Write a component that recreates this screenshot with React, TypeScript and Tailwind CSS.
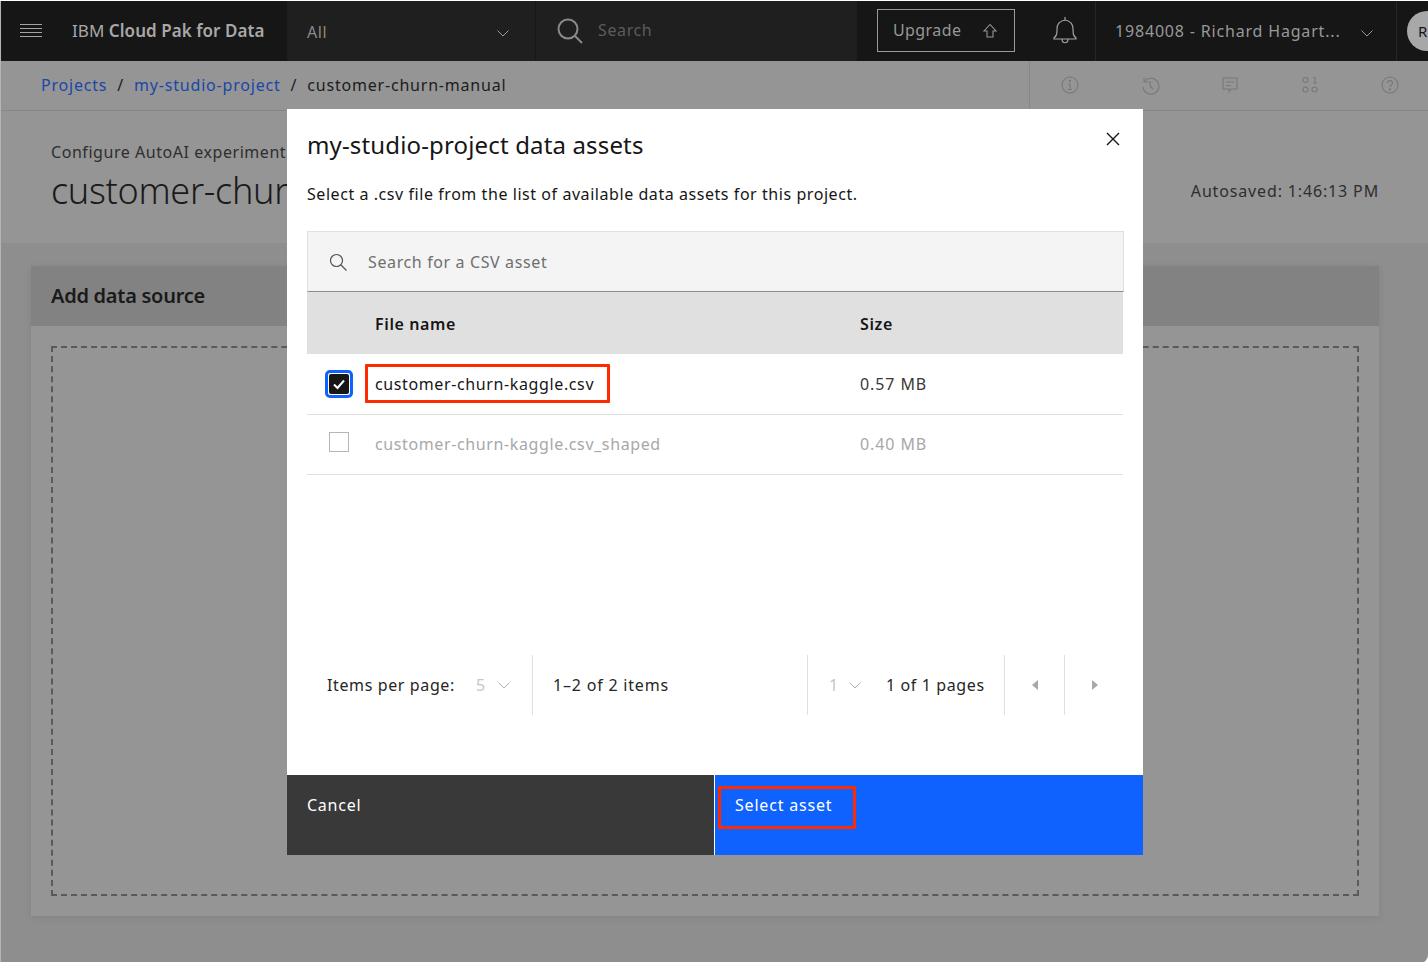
import React from "react";

const Chevron = ({ className = "" }: { className?: string }) => (
  <svg width="16" height="16" viewBox="0 0 16 16" fill="none" stroke="currentColor" strokeWidth="1" className={className}>
    <path d="M2.5 5.5 8 11l5.5-5.5" />
  </svg>
);

const Ic = ({ children }: { children: React.ReactNode }) => (
  <svg width="20" height="20" viewBox="0 0 20 20" fill="none" stroke="#787878" strokeWidth="1.1">
    {children}
  </svg>
);

const Sep = () => <div className="w-px h-full shrink-0 bg-[#e0e0e0]" />;

export default function App() {
  return (
    <div className="relative w-[1428px] h-[962px] overflow-hidden bg-white text-[16px] tracking-[0.62px] font-['Noto_Sans',sans-serif]">
      <div className="w-full h-full mt-px border-l border-[#b5b5b5] bg-[#8e8e8e] rounded-br-[8px] flex flex-col overflow-hidden">
        {/* Top bar */}
        <header className="h-[60px] shrink-0 flex bg-[#161616] text-[#9a9a9a]">
          <div className="w-[286px] shrink-0 flex items-center">
            <svg width="22" height="16" viewBox="0 0 22 16" stroke="#a3a3a3" strokeWidth="1.2" className="ml-[19px]">
              <path d="M0 1.5h22M0 5.5h22M0 9.5h22M0 13.5h22" />
            </svg>
            <span className="ml-[30px] text-[17px] tracking-[0.05px] text-[#a8a8a8] whitespace-nowrap">
              IBM <span className="font-semibold">Cloud Pak for Data</span>
            </span>
          </div>
          <div className="w-[570px] shrink-0 flex bg-[#1f1f1f]">
            <div className="w-[249px] flex items-center justify-between pl-[20px] pr-[24px] border-r border-[#161616] text-[#8a8a8a]">
              <span className="pt-[2px]">All</span>
              <Chevron className="mt-[4px] text-[#999999]" />
            </div>
            <div className="flex items-center pl-[20px] gap-[14px] text-[#5c5c5c]">
              <svg width="28" height="28" viewBox="0 0 28 28" fill="none" stroke="#8a8a8a" strokeWidth="2">
                <circle cx="12" cy="12" r="9.5" />
                <path d="m19 19 7 7" />
              </svg>
              <span className="pb-[2px]">Search</span>
            </div>
          </div>
          <div className="flex-1 flex items-center">
            <div className="ml-[20px] mb-[1px] w-[138px] h-[43px] shrink-0 border border-[#9a9a9a] flex items-center pl-[15px] gap-[21px]">
              <span className="text-[#969696] tracking-[0.4px] pb-[1px]">Upgrade</span>
              <svg width="16" height="16" viewBox="0 0 16 16" fill="none" stroke="#969696" strokeWidth="1.1">
                <path d="M8 1.5 2 8h3v6h6V8h3z" />
              </svg>
            </div>
            <svg width="26" height="30" viewBox="0 0 26 30" fill="none" stroke="#a3a3a3" strokeWidth="1.2" className="ml-[37px] shrink-0">
              <path d="M2 22c3-3 3-4 3-9 0-5 3-8 8-9 5 1 8 4 8 9 0 5 0 6 3 9v1H2zM13 4V1M10 23c0 5 6 5 6 0" />
            </svg>
            <div className="ml-[17px] h-full shrink-0 border-l border-[#262626] pl-[19px] w-[302px] flex items-center border-r border-r-[#262626]">
              <span className="w-[232px] tracking-[0.82px] whitespace-nowrap text-[#999999]">1984008 - Richard Hagart...</span>
              <Chevron className="ml-[12px] mt-[3px] text-[#999999]" />
            </div>
            <div className="ml-[10px] w-[40px] h-[40px] shrink-0 rounded-full bg-[#a8a8a8] text-[#161616] pl-[11px] flex items-center text-[15px]">
              R
            </div>
          </div>
        </header>

        {/* Breadcrumb bar */}
        <div className="h-[50px] shrink-0 flex bg-[#959595] border-b border-[#878787]">
          <div className="w-[1028px] shrink-0 flex items-center pl-[40px] pb-[2px] gap-[10px] tracking-[0.8px] text-[#1c1c1c]">
            <span className="text-[#1a47a8]">Projects</span>
            <span>/</span>
            <span className="text-[#1a47a8]">my-studio-project</span>
            <span>/</span>
            <span>customer-churn-manual</span>
          </div>
          <div className="flex-1 border-l border-[#878787] flex items-center pl-[30px] pb-[1px] gap-[60px]">
            <Ic>
              <circle cx="10" cy="10" r="8" />
              <path d="M10 9v5M8 14.5h4M8.5 9H10" />
              <circle cx="10" cy="6" r=".6" fill="#787878" />
            </Ic>
            <Ic>
              <path d="M4 2.5V7h4.5" />
              <path d="M4.5 6.5A8 8 0 1 1 3 12" />
              <path d="M10 6v5l3 3" />
            </Ic>
            <Ic>
              <path d="M3 3h14v11H11l-2 3v-3H3z" />
              <path d="M6 7h8M6 10.5h5" />
            </Ic>
            <Ic>
              <circle cx="5.5" cy="5" r="2.5" />
              <path d="M13 3l2-.5V8M13 8h4" />
              <circle cx="5.5" cy="14.5" r="2.5" />
              <circle cx="14.5" cy="14.5" r="2.5" />
            </Ic>
            <Ic>
              <circle cx="10" cy="10" r="8" />
              <path d="M7.5 8c0-3.200 5-3.200 5 0 0 2-2.500 2-2.500 4" />
              <circle cx="10" cy="14.500" r=".6" fill="#787878" />
            </Ic>
          </div>
        </div>

        {/* Page heading */}
        <div className="h-[132px] shrink-0 bg-[#959595] flex justify-between pl-[50px] pr-[49px]">
          <div className="pt-[30px]">
            <div className="text-[#2e2e2e] leading-[22px] tracking-[0.55px]">Configure AutoAI experiment</div>
            <div className="mt-[6px] text-[36px] leading-[44px] font-light tracking-[-0.3px] text-[#1a1a1a] whitespace-nowrap">customer-churn-manual</div>
          </div>
          <div className="pt-[68px] text-[#2e2e2e] tracking-[0.85px]">Autosaved: 1:46:13 PM</div>
        </div>

        {/* Content */}
        <div className="flex-1 px-[30px] pt-[23px]">
          <div className="w-[1348px] h-[650px] bg-[#959595] shadow-[0_2px_8px_rgba(0,0,0,0.08)] flex flex-col">
            <div className="h-[60px] shrink-0 bg-[#828282] flex items-center pl-[20px] text-[20px] tracking-[-0.27px] font-semibold text-[#1a1a1a]">
              Add data source
            </div>
            <div className="flex-1 pl-[20px] pr-[20px] pt-[20px] pb-[20px]">
              <div className="w-full h-full border-2 border-dashed border-[#5a5a5a]" />
            </div>
          </div>
        </div>
      </div>

      {/* Modal */}
      <div className="absolute left-[287px] top-[109px] w-[856px] h-[746px] bg-white flex flex-col text-[#161616]">
        <div className="relative px-[20px] pt-[20px] h-[122px] shrink-0">
          <div className="text-[24px] leading-[32px] tracking-[0.15px]">my-studio-project data assets</div>
          <div className="mt-[22px] leading-[22px] tracking-[0.56px] whitespace-nowrap">Select a .csv file from the list of available data assets for this project.</div>
          <svg width="14" height="14" viewBox="0 0 14 14" stroke="#161616" strokeWidth="1.4" className="absolute left-[819px] top-[23px]">
            <path d="m1 1 12 12M13 1 1 13" />
          </svg>
        </div>

        <div className="mx-[20px] w-[817px] h-[61px] shrink-0 bg-[#f4f4f4] border border-[#e0e0e0] border-b-[#8d8d8d] flex items-center pl-[20px] text-[#6f6f6f]">
          <svg width="20" height="20" viewBox="0 0 20 20" fill="none" stroke="#525252" strokeWidth="1.2" className="mr-[20px]">
            <circle cx="8.500" cy="8.500" r="6" />
            <path d="m13 13 5.500 5.500" />
          </svg>
          Search for a CSV asset
        </div>

        <div className="mx-[20px] w-[816px] h-[62px] shrink-0 bg-[#e0e0e0] flex items-center font-semibold">
          <div className="ml-[68px] w-[485px] pt-[1px]">File name</div>
          <div className="pt-[1px]">Size</div>
        </div>

        <div className="mx-[20px] w-[816px] h-[61px] shrink-0 border-b border-[#e0e0e0] flex items-center">
          <div className="ml-[18px] w-[28px] h-[28px] rounded-[5px] border-[3px] border-[#0f62fe] flex items-center justify-center">
            <div className="w-[20px] h-[20px] rounded-[2px] bg-[#161616] flex items-center justify-center">
              <svg width="14" height="14" viewBox="0 0 14 14" fill="none" stroke="white" strokeWidth="2">
                <path d="m2 7.500 3.500 3.500L12 3.500" />
              </svg>
            </div>
          </div>
          <div className="ml-[22px] w-[485px]">customer-churn-kaggle.csv</div>
          <div className="text-[#393939] tracking-[0.9px]">0.57 MB</div>
        </div>

        <div className="mx-[20px] w-[816px] h-[60px] shrink-0 border-b border-[#e0e0e0] flex items-center text-[#a8a8a8]">
          <div className="ml-[22px] w-[20px] h-[20px] -mt-[6px] border border-[#b5b5b5]" />
          <div className="ml-[26px] w-[485px] pb-[2px]">customer-churn-kaggle.csv_shaped</div>
          <div className="pb-[2px] tracking-[0.9px]">0.40 MB</div>
        </div>

        <div className="flex-1 pt-[180px]">
          <div className="ml-[40px] h-[60px] flex items-center text-[#262626]">
            <div className="w-[149px] whitespace-nowrap">Items per page:</div>
            <div className="w-[56px] flex items-center text-[#c6c6c6]">
              5
              <Chevron className="ml-[10px] text-[#b0b0b0]" />
            </div>
            <Sep />
            <div className="w-[274px] pl-[20px] tracking-[0.8px]">1–2 of 2 items</div>
            <Sep />
            <div className="w-[78px] pl-[21px] flex items-center text-[#c6c6c6]">
              1
              <Chevron className="ml-[8px] text-[#b0b0b0]" />
            </div>
            <div className="w-[118px] whitespace-nowrap">1 of 1 pages</div>
            <Sep />
            <div className="w-[59px] flex justify-center">
              <div className="w-0 h-0 border-y-[5px] border-y-transparent border-r-[6px] border-r-[#a8a8a8]" />
            </div>
            <Sep />
            <div className="w-[59px] flex justify-center">
              <div className="w-0 h-0 border-y-[5px] border-y-transparent border-l-[6px] border-l-[#a8a8a8]" />
            </div>
          </div>
        </div>

        <div className="h-[80px] shrink-0 flex text-white">
          <div className="w-[427px] bg-[#393939] pl-[20px] pt-[19px] leading-[22px] tracking-[0.75px]">Cancel</div>
          <div className="w-px bg-white" />
          <div className="flex-1 bg-[#0f62fe] pl-[20px] pt-[19px] leading-[22px] tracking-[0.8px]">Select asset</div>
        </div>
      </div>

      {/* Annotation boxes */}
      <div className="absolute left-[365px] top-[364px] w-[245px] h-[39px] border-[3px] border-[#ff2a00] rounded-[1px]" />
      <div className="absolute left-[718px] top-[786px] w-[138px] h-[43px] border-[3px] border-[#ff2a00] rounded-[1px]" />
    </div>
  );
}
